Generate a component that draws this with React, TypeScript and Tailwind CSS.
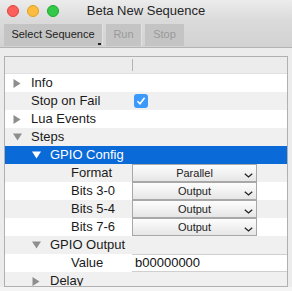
import React from 'react';

type Row = {
  label: string;
  level: number;
  toggle?: 'open' | 'closed';
  kind?: 'check' | 'select' | 'text';
  value?: string;
  selected?: boolean;
};

const rows: Row[] = [
  { label: 'Info', level: 0, toggle: 'closed' },
  { label: 'Stop on Fail', level: 0, kind: 'check' },
  { label: 'Lua Events', level: 0, toggle: 'closed' },
  { label: 'Steps', level: 0, toggle: 'open' },
  { label: 'GPIO Config', level: 1, toggle: 'open', selected: true },
  { label: 'Format', level: 2, kind: 'select', value: 'Parallel' },
  { label: 'Bits 3-0', level: 2, kind: 'select', value: 'Output' },
  { label: 'Bits 5-4', level: 2, kind: 'select', value: 'Output' },
  { label: 'Bits 7-6', level: 2, kind: 'select', value: 'Output' },
  { label: 'GPIO Output', level: 1, toggle: 'open' },
  { label: 'Value', level: 2, kind: 'text', value: 'b00000000' },
  { label: 'Delay', level: 1, toggle: 'closed' },
];

const Triangle: React.FC<{ open: boolean; color: string }> = ({ open, color }) =>
  open ? (
    <svg width="9" height="8" viewBox="0 0 9 8">
      <path d="M0 0.5 L9 0.5 L4.5 7.5 Z" fill={color} />
    </svg>
  ) : (
    <svg width="8" height="9" viewBox="0 0 8 9">
      <path d="M0.5 0 L7.5 4.5 L0.5 9 Z" fill={color} />
    </svg>
  );

const Chevron: React.FC = () => (
  <svg width="9" height="5" viewBox="0 0 9 5" className="absolute right-[3px] bottom-[3px]">
    <path d="M0.8 0.8 L4.5 4 L8.2 0.8" stroke="#222" strokeWidth="1.3" fill="none" />
  </svg>
);

// label padding per nesting level: toggled rows / plain rows
const toggledPad = ['pl-[8px]', 'pl-[27px]', 'pl-[47px]'];
const plainPad = ['pl-[26px]', 'pl-[45px]', 'pl-[66px]'];

const App: React.FC = () => {
  return (
    <div
      className="w-[292px] h-[291px] overflow-hidden bg-[#ececec] flex flex-col text-[#1a1a1a]"
      style={{ fontFamily: '"Liberation Sans", Arial, sans-serif' }}
    >
      {/* Title bar */}
      <div className="relative h-[22px] shrink-0 bg-gradient-to-b from-[#ececec] to-[#d9d9d9] flex items-center">
        <div className="flex gap-[8px] pl-[7px]">
          <span className="w-[12px] h-[12px] rounded-full bg-[#fc605b] border border-[#e0443e]" />
          <span className="w-[12px] h-[12px] rounded-full bg-[#fdbc40] border border-[#dea123]" />
          <span className="w-[12px] h-[12px] rounded-full bg-[#34c84a] border border-[#1aab29]" />
        </div>
        <div className="absolute inset-0 flex items-center justify-center text-[13px] text-[#262626]">
          Beta New Sequence
        </div>
      </div>

      {/* Toolbar */}
      <div className="h-[26px] shrink-0 bg-gradient-to-b from-[#dadada] to-[#d2d2d2] border-b border-[#b4b4b4] flex items-center gap-[3px] pl-[4px] text-[11px]">
        <div className="relative h-[22px] w-[99px] bg-[#c4c4c4] border-r border-[#e2e2e2] flex items-center justify-center text-[#222]">
          Select Sequence
          <span className="absolute right-[1px] bottom-[1px] w-[3px] h-[2px] bg-[#222]" />
        </div>
        <div className="h-[22px] w-[36px] bg-[#c4c4c4] border-r border-[#e2e2e2] flex items-center justify-center text-[#9a9a9a]">
          Run
        </div>
        <div className="h-[22px] w-[39px] bg-[#c4c4c4] flex items-center justify-center text-[#9a9a9a]">
          Stop
        </div>
      </div>

      {/* Outline table */}
      <div className="mt-[8px] mx-[4px] flex-1 overflow-hidden border border-[#b0b0b0] bg-white flex flex-col text-[13px]">
        <div className="h-[17px] shrink-0 bg-[#ececec] border-b border-[#e0e0e0] flex items-center">
          <div className="w-[127px]" />
          <div className="w-px h-[12px] bg-[#b4b4b4]" />
        </div>
        {rows.map((row, i) => {
          const striped = i % 2 === 1;
          const bg = row.selected ? 'bg-[#0a6ad8] text-white' : striped ? 'bg-[#f0f0f0]' : 'bg-white';
          const pad = row.toggle ? toggledPad[row.level] : plainPad[row.level];
          return (
            <div key={row.label} className={`h-[18px] shrink-0 flex items-center ${bg}`}>
              <div className={`w-[127px] shrink-0 flex items-center ${pad}`}>
                {row.toggle ? (
                  <span className="w-[18px] flex items-center">
                    <Triangle open={row.toggle === 'open'} color={row.selected ? '#ffffff' : '#8e8e8e'} />
                  </span>
                ) : null}
                <span>{row.label}</span>
              </div>
              {row.kind === 'check' && (
                <span className="ml-[2px] w-[14px] h-[14px] rounded-[3px] bg-[#3b99fc] flex items-center justify-center">
                  <svg width="10" height="10" viewBox="0 0 10 10">
                    <path d="M1.5 5.2 L4 7.8 L8.6 1.8" stroke="white" strokeWidth="1.6" fill="none" />
                  </svg>
                </span>
              )}
              {row.kind === 'select' && (
                <div className="relative h-[18px] w-[125px] border border-[#a8a8a8] bg-gradient-to-b from-[#fdfdfd] to-[#e6e6e6] flex items-center justify-center text-[11px] text-[#222]">
                  {row.value}
                  <Chevron />
                </div>
              )}
              {row.kind === 'text' && (
                <div className="h-[18px] flex-1 bg-white border-y border-[#cfcfcf] flex items-center pl-[3px] text-[#111]">
                  {row.value}
                </div>
              )}
            </div>
          );
        })}
      </div>
      <div className="h-[4px] shrink-0 bg-[#f4f4f4]" />
    </div>
  );
};

export default App;
